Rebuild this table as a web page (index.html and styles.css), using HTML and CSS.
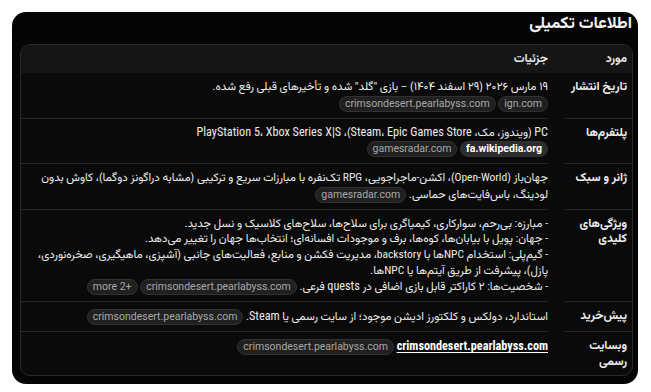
FILE: index.html
```html
<!DOCTYPE html>
<html lang="fa" dir="rtl">
<head>
<meta charset="utf-8">
<link rel="stylesheet" href="styles.css">
</head>
<body>
<div class="card">
  <h2 class="title">اطلاعات تکمیلی</h2>
  <div class="panel">
    <div class="row head">
      <div class="cell label">مورد</div>
      <div class="cell detail">جزئیات</div>
    </div>
    <div class="row">
      <div class="cell label">تاریخ انتشار</div>
      <div class="cell detail">۱۹ مارس ۲۰۲۶ (۲۹ اسفند ۱۴۰۴) – بازی "گلد" شده و تأخیرهای قبلی رفع شده. <span class="cites"><span class="chip">ign.com</span> <span class="chip">crimsondesert.pearlabyss.com</span></span></div>
    </div>
    <div class="row">
      <div class="cell label">پلتفرم‌ها</div>
      <div class="cell detail"><span class="lat">PC</span> (ویندوز، مک، <span class="lat">Steam</span>، <span class="lat">Epic Games Store</span>)، <span class="lat">PlayStation 5</span>، <span class="lat">Xbox Series X|S</span> <span class="cites"><span class="chip hot">fa.wikipedia.org</span> <span class="chip">gamesradar.com</span></span></div>
    </div>
    <div class="row">
      <div class="cell label">ژانر و سبک</div>
      <div class="cell detail">جهان‌باز (Open-World)، اکشن-ماجراجویی، RPG تک‌نفره با مبارزات سریع و ترکیبی (مشابه دراگونز دوگما)، کاوش بدون لودینگ، باس‌فایت‌های حماسی. <span class="cites"><span class="chip">gamesradar.com</span></span></div>
    </div>
    <div class="row">
      <div class="cell label">ویژگی‌های کلیدی</div>
      <div class="cell detail">- مبارزه: بی‌رحم، سوارکاری، کیمیاگری برای سلاح‌ها، سلاح‌های کلاسیک و نسل جدید.<br>- جهان: پویل با بیابان‌ها، کوه‌ها، برف و موجودات افسانه‌ای؛ انتخاب‌ها جهان را تغییر می‌دهد.<br>- گیم‌پلی: استخدام NPCها با backstory، مدیریت فکشن و منابع، فعالیت‌های جانبی (آشپزی، ماهیگیری، صخره‌نوردی، پازل)، پیشرفت از طریق آیتم‌ها یا NPCها.<br>- شخصیت‌ها: ۲ کاراکتر قابل بازی اضافی در <span class="lat">quests</span> فرعی. <span class="cites"><span class="chip">crimsondesert.pearlabyss.com</span> <span class="chip">+2 more</span></span></div>
    </div>
    <div class="row">
      <div class="cell label">پیش‌خرید</div>
      <div class="cell detail">استاندارد، دولکس و کلکتورز ادیشن موجود؛ از سایت رسمی یا <span class="lat">Steam</span>. <span class="cites"><span class="chip">crimsondesert.pearlabyss.com</span></span></div>
    </div>
    <div class="row last">
      <div class="cell label">وبسایت رسمی</div>
      <div class="cell detail"><a class="link lat" href="#">crimsondesert.pearlabyss.com</a> <span class="cites"><span class="chip">crimsondesert.pearlabyss.com</span></span></div>
    </div>
  </div>
</div>
</body>
</html>
```
FILE: styles.css
```css
html, body {
  margin: 0;
  padding: 0;
  background: #ffffff;
}
body {
  padding: 12px 13px 12px 12px;
  font-family: Roboto, "Vazirmatn", "Noto Sans Arabic", "DejaVu Sans Condensed", "DejaVu Sans", sans-serif;
  font-stretch: condensed;
  color: #ececec;
}
.card {
  background: #050505;
  border-radius: 14px;
  padding: 0 5px 8px 8px;
}
.title {
  margin: 0 0 10px 0;
  padding: 0 1px 0 0;
  font-size: 16.5px;
  font-weight: 700;
  line-height: 22px;
  color: #f2f2f2;
}
.panel {
  border: 1px solid #2a2a2a;
  border-radius: 10px;
  background: #0a0a0a;
  overflow: hidden;
}
.row {
  display: grid;
  grid-template-columns: 67px 1fr;
  column-gap: 17px;
}
.head {
  background: #151515;
  height: 28px;
  align-items: center;
}
.head .cell {
  font-size: 12px;
  font-weight: 700;
  color: #e8e8e8;
  padding-top: 0;
  padding-bottom: 0;
}
.cell {
  font-size: 11.5px;
  line-height: 15.6px;
  border-bottom: 1px solid #242424;
}
.row.head .cell { border-bottom: none; }
.row.last .cell { border-bottom: none; }
.label {
  padding: 6px 5px 6px 0;
  font-weight: 700;
  font-size: 12px;
  color: #f0f0f0;
}
.detail {
  padding: 6px 0 6px 10px;
  color: #ececec;
}
.lat {
  font-size: 12.2px;
}
.cites {
  display: inline-block;
  white-space: nowrap;
}
.chip {
  display: inline-block;
  font-family: Roboto, sans-serif;
  font-stretch: normal;
  font-size: 10.5px;
  line-height: 14px;
  padding: 0 5px;
  margin-top: 1px;
  border-radius: 9px;
  background: #202020;
  border: 1px solid #313131;
  color: #a8a8a8;
  vertical-align: middle;
}
.chip.hot {
  background: #2d2d2d;
  color: #ffffff;
  font-weight: 700;
}
.link {
  color: #ffffff;
  font-weight: 700;
  text-decoration: underline;
  text-underline-offset: 2px;
}
```
